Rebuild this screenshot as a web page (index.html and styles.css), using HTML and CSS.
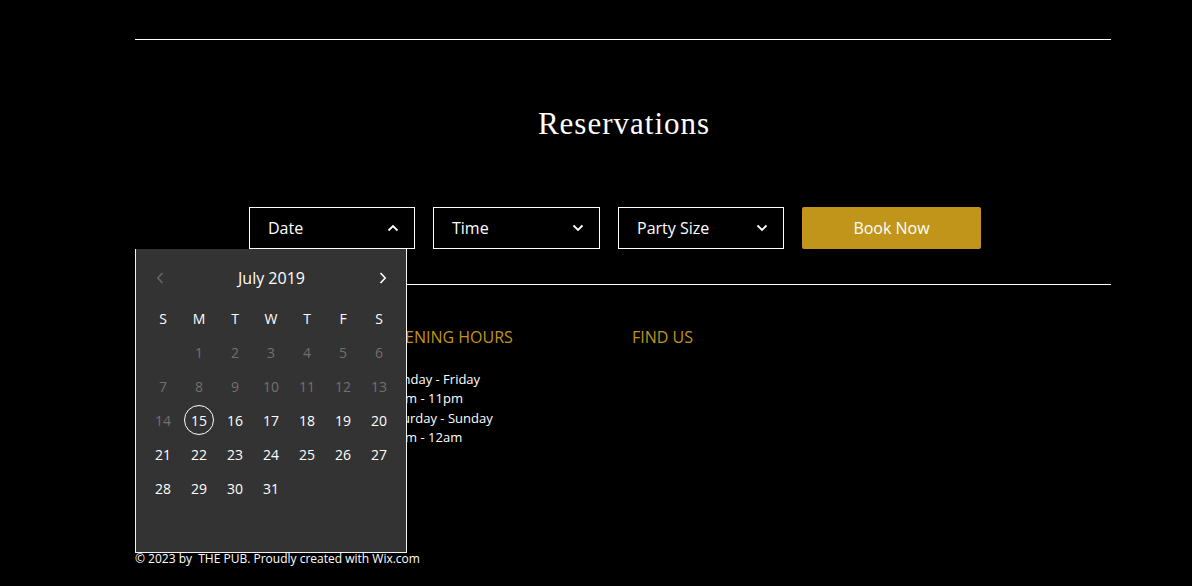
FILE: index.html
```html
<!DOCTYPE html>
<html lang="en">
<head>
<meta charset="utf-8">
<title>Reservations</title>
<link rel="stylesheet" href="styles.css">
</head>
<body>
<main class="page">
  <div class="rule"></div>
  <h1 class="title">Reservations</h1>
  <form class="booking">
    <div class="field field-open">
      <span class="field-label">Date</span>
      <svg class="chev" width="12" height="8" viewBox="0 0 12 8"><path d="M1.5 6.5 L6 2 L10.5 6.5" fill="none" stroke="#fff" stroke-width="1.8"/></svg>
      <div class="calendar">
        <div class="cal-nav">
          <span class="cal-btn"><svg width="8" height="12" viewBox="0 0 8 12"><path d="M6.5 1 L1.8 6 L6.5 11" fill="none" stroke="#666" stroke-width="1.6"/></svg></span>
          <span class="cal-month">July 2019</span>
          <span class="cal-btn"><svg width="8" height="12" viewBox="0 0 8 12"><path d="M1.5 1 L6.2 6 L1.5 11" fill="none" stroke="#fff" stroke-width="1.6"/></svg></span>
        </div>
        <div class="cal-grid">
          <span class="wd">S</span><span class="wd">M</span><span class="wd">T</span><span class="wd">W</span><span class="wd">T</span><span class="wd">F</span><span class="wd">S</span>
          <span class="d"></span><span class="d off">1</span><span class="d off">2</span><span class="d off">3</span><span class="d off">4</span><span class="d off">5</span><span class="d off">6</span>
          <span class="d off">7</span><span class="d off">8</span><span class="d off">9</span><span class="d off">10</span><span class="d off">11</span><span class="d off">12</span><span class="d off">13</span>
          <span class="d off">14</span><span class="d today"><span class="ring">15</span></span><span class="d">16</span><span class="d">17</span><span class="d">18</span><span class="d">19</span><span class="d">20</span>
          <span class="d">21</span><span class="d">22</span><span class="d">23</span><span class="d">24</span><span class="d">25</span><span class="d">26</span><span class="d">27</span>
          <span class="d">28</span><span class="d">29</span><span class="d">30</span><span class="d">31</span>
        </div>
      </div>
    </div>
    <div class="field field-wide">
      <span class="field-label">Time</span>
      <svg class="chev" width="12" height="8" viewBox="0 0 12 8"><path d="M1.5 1.5 L6 6 L10.5 1.5" fill="none" stroke="#fff" stroke-width="1.8"/></svg>
    </div>
    <div class="field">
      <span class="field-label">Party Size</span>
      <svg class="chev" width="12" height="8" viewBox="0 0 12 8"><path d="M1.5 1.5 L6 6 L10.5 1.5" fill="none" stroke="#fff" stroke-width="1.8"/></svg>
    </div>
    <button type="button" class="book">Book Now</button>
  </form>
  <div class="rule rule-2"></div>
  <section class="info">
    <div class="col"></div>
    <div class="col">
      <h2 class="col-head">OPENING HOURS</h2>
      <p class="col-text">Monday - Friday<br>11am - 11pm<br>Saturday - Sunday<br>11am - 12am</p>
    </div>
    <div class="col">
      <h2 class="col-head">FIND US</h2>
    </div>
  </section>
  <footer class="copy">© 2023 by&nbsp; THE PUB. Proudly created with Wix.com</footer>
</main>
</body>
</html>
```

FILE: styles.css
```css
* { box-sizing: border-box; }
html, body { margin: 0; padding: 0; background: #000; }
body {
  color: #fff;
  font-family: "Open Sans", "Liberation Sans", sans-serif;
}
.page {
  width: 976px;
  margin-left: 135px;
  padding-top: 39px;
}
.rule { height: 1px; background: #fff; }
.title {
  margin: 64px 0 0;
  font-family: "Liberation Serif", "DejaVu Serif", serif;
  font-weight: 400;
  font-size: 31px;
  line-height: 40px;
  letter-spacing: 1px;
  text-align: center;
  color: #fff;
  padding-left: 2px;
}
.booking {
  display: flex;
  gap: 18px;
  margin: 63px 0 0 114px;
  height: 42px;
}
.field {
  position: relative;
  width: 166px;
  height: 42px;
  border: 1px solid #fff;
  display: flex;
  align-items: center;
  justify-content: space-between;
  padding: 0 15px 0 18px;
  font-size: 16px;
}
.field-wide { width: 167px; }
.field-label { line-height: 22px; }
.chev { display: block; }
.book {
  width: 179px;
  height: 42px;
  border: 0;
  border-radius: 2px;
  background: #c0951a;
  color: #fff;
  font-family: "Open Sans", "Liberation Sans", sans-serif;
  font-size: 16px;
  padding: 0;
}
.rule-2 { margin-top: 35px; }

.calendar {
  position: absolute;
  left: -115px;
  top: 100%;
  margin-top: 1px;
  width: 272px;
  height: 304px;
  background: #333;
  border: 1px solid #f2f2f2;
  border-top: 0;
  padding: 12px 8px 0 9px;
  z-index: 5;
}
.cal-nav {
  height: 34px;
  display: flex;
  align-items: center;
  justify-content: space-between;
}
.cal-btn {
  width: 30px;
  display: flex;
  justify-content: center;
}
.cal-btn svg { display: block; }
.cal-month { font-size: 16px; line-height: 22px; }
.cal-grid {
  margin-top: 6px;
  display: grid;
  grid-template-columns: repeat(7, 36px);
  grid-auto-rows: 34px;
}
.wd, .d {
  display: flex;
  align-items: center;
  justify-content: center;
  font-size: 14px;
  color: #fff;
}
.d.off { color: #707070; }
.ring {
  width: 30px;
  height: 30px;
  border: 1px solid #fff;
  border-radius: 50%;
  display: flex;
  align-items: center;
  justify-content: center;
}

.info {
  display: grid;
  grid-template-columns: 248px 249px 1fr;
  margin-top: 41px;
  height: 225px;
}
.col-head {
  margin: 0;
  font-size: 16px;
  line-height: 22px;
  font-weight: 400;
  color: #c0951a;
}
.col-text {
  margin: 22px 0 0;
  font-size: 13px;
  line-height: 19.4px;
  color: #fff;
}
.copy {
  font-size: 12px;
  line-height: 16px;
  color: #fff;
}
```
